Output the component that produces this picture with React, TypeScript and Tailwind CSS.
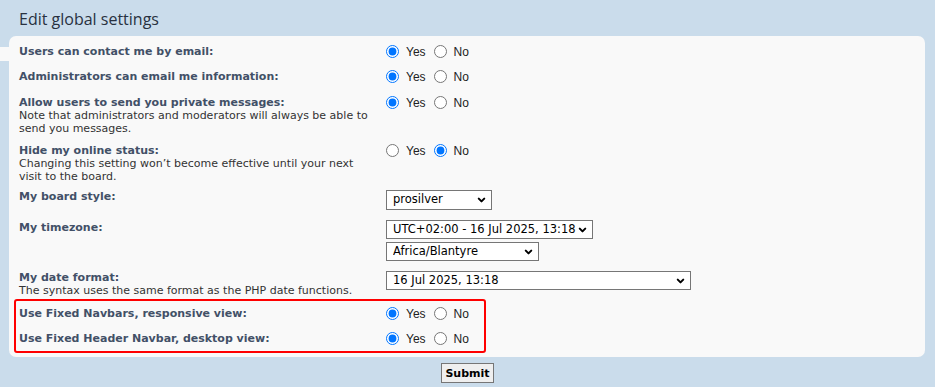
import React from 'react'
import { ChevronDown } from 'lucide-react'

type Row = {
    label: string
    note?: string
    h: string
    kind: 'yesno' | 'style' | 'tz' | 'date'
    yes?: boolean
}

const rows: Row[] = [
    { label: 'Users can contact me by email:', h: 'h-[25px]', kind: 'yesno', yes: true },
    { label: 'Administrators can email me information:', h: 'h-[26px]', kind: 'yesno', yes: true },
    { label: 'Allow users to send you private messages:', note: 'Note that administrators and moderators will always be able to send you messages.', h: 'h-[48px]', kind: 'yesno', yes: true },
    { label: 'Hide my online status:', note: 'Changing this setting won’t become effective until your next visit to the board.', h: 'h-[46px]', kind: 'yesno', yes: false },
    { label: 'My board style:', h: 'h-[31px]', kind: 'style' },
    { label: 'My timezone:', h: 'h-[50px]', kind: 'tz' },
    { label: 'My date format:', note: 'The syntax uses the same format as the PHP date functions.', h: 'h-[36px]', kind: 'date' },
    { label: 'Use Fixed Navbars, responsive view:', h: 'h-[25px]', kind: 'yesno', yes: true },
    { label: 'Use Fixed Header Navbar, desktop view:', h: 'h-[25px]', kind: 'yesno', yes: true },
]

function Select({ value, className }: { value: string, className: string }) {
    return (
        <div className={`relative ${className}`}>
            <select defaultValue={value} className="block w-full h-full appearance-none bg-white border border-[#767676] pl-[6px] pr-[14px] text-[11.5px] text-black font-['DejaVu_Sans',sans-serif] outline-none">
                <option>{value}</option>
            </select>
            <ChevronDown className="absolute right-[5px] top-1/2 -translate-y-1/2 w-[11px] h-[11px] text-black pointer-events-none" strokeWidth={4.5} />
        </div>
    )
}

function YesNo({ name, yes }: { name: string, yes?: boolean }) {
    return (
        <div className="flex items-center h-[13px] text-[12px] text-[#222] font-['Liberation_Sans',Arial,sans-serif]">
            <input type="radio" name={name} defaultChecked={yes} className="m-0 w-[13px] h-[13px] accent-[#0075ff]" />
            <span className="ml-[7px] mr-[8px]">Yes</span>
            <input type="radio" name={name} defaultChecked={!yes} className="m-0 w-[13px] h-[13px] accent-[#0075ff]" />
            <span className="ml-[7px]">No</span>
        </div>
    )
}

function Field({ row, i }: { row: Row, i: number }) {
    if (row.kind === 'yesno') return <YesNo name={`r${i}`} yes={row.yes} />
    if (row.kind === 'style') return <Select value="prosilver" className="w-[106px] h-[20px]" />
    if (row.kind === 'tz') return (
        <div className="flex flex-col gap-[3px] -mt-[1px]">
            <Select value="UTC+02:00 - 16 Jul 2025, 13:18" className="w-[207px] h-[19px]" />
            <Select value="Africa/Blantyre" className="w-[153px] h-[19px]" />
        </div>
    )
    return <Select value="16 Jul 2025, 13:18" className="w-[305px] h-[19px]" />
}

export default function App() {
    return (
        <div className="w-[935px] h-[387px] bg-[#cadceb] relative overflow-hidden font-['DejaVu_Sans',Verdana,sans-serif]">
            <h2 className="pl-[19px] pt-[7px] h-[36px] text-[16px] text-[#28313f] font-['Open_Sans',sans-serif] font-normal">
                Edit global settings
            </h2>
            <div className="absolute left-0 top-[47px] w-[10px] h-[14px] bg-[#f9f9f9]" />
            <div className="relative ml-[9px] w-[916px] bg-[#f9f9f9] rounded-[7px] pt-[9px] pl-[10px]">
                {rows.map((row, i) => (
                    <div key={i} className={`flex ${row.h}`}>
                        <div className="w-[367px] text-[11px] leading-[13px]">
                            <div className="font-bold text-[#425067]">{row.label}</div>
                            {row.note && <div className="text-[#333] pr-[10px]">{row.note}</div>}
                        </div>
                        <div><Field row={row} i={i} /></div>
                    </div>
                ))}
                <div className="absolute left-[5px] top-[263px] w-[472px] h-[54px] border-2 border-[#ff0000] rounded-[3px]" />
            </div>
            <div className="flex justify-center pt-[6px]">
                <button className="h-[20px] px-[3px] bg-[#efefef] border border-[#767676] text-[11px] font-bold text-black leading-none">
                    Submit
                </button>
            </div>
        </div>
    )
}
